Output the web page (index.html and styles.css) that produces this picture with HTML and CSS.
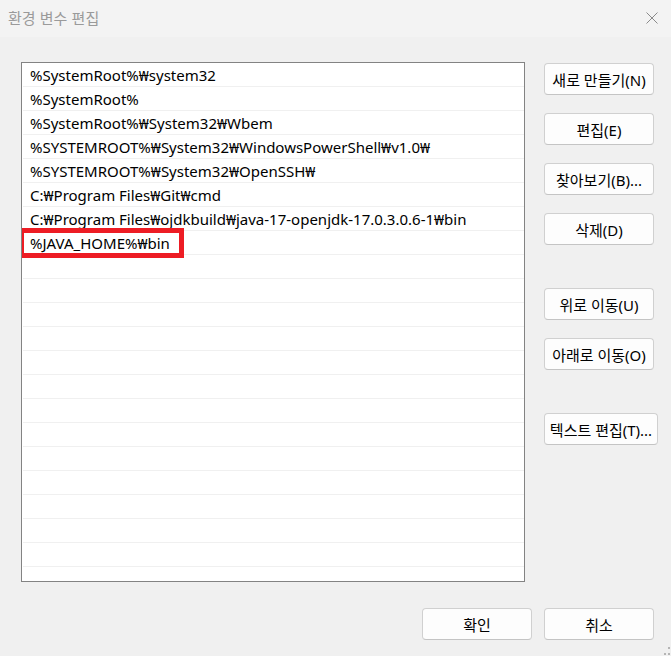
FILE: index.html
```html
<!DOCTYPE html>
<html lang="ko">
<head>
  <meta charset="UTF-8">
  <title>환경 변수 편집</title>
  <link rel="stylesheet" href="styles.css">
</head>
<body>

  <div class="window">
    <div class="titlebar">
      <span class="title">환경 변수 편집</span>
      <svg class="close" width="12" height="12" viewBox="0 0 12 12">
        <path d="M0.5 0.5 L11.5 11.5 M11.5 0.5 L0.5 11.5" stroke="#8a8a8a" stroke-width="1" fill="none"/>
      </svg>
    </div>

    <div class="content">
      <div class="list">
        <div class="row">%SystemRoot%₩system32</div>
        <div class="row">%SystemRoot%</div>
        <div class="row">%SystemRoot%₩System32₩Wbem</div>
        <div class="row">%SYSTEMROOT%₩System32₩WindowsPowerShell₩v1.0₩</div>
        <div class="row">%SYSTEMROOT%₩System32₩OpenSSH₩</div>
        <div class="row">C:₩Program Files₩Git₩cmd</div>
        <div class="row">C:₩Program Files₩ojdkbuild₩java-17-openjdk-17.0.3.0.6-1₩bin</div>
        <div class="row selected">%JAVA_HOME%₩bin<span class="highlight"></span></div>
        <div class="row"></div>
        <div class="row"></div>
        <div class="row"></div>
        <div class="row"></div>
        <div class="row"></div>
        <div class="row"></div>
        <div class="row"></div>
        <div class="row"></div>
        <div class="row"></div>
        <div class="row"></div>
        <div class="row"></div>
        <div class="row"></div>
        <div class="row"></div>
        <div class="row"></div>
      </div>

      <div class="actions">
        <button class="btn">새로 만들기(N)</button>
        <button class="btn">편집(E)</button>
        <button class="btn">찾아보기(B)...</button>
        <button class="btn">삭제(D)</button>
        <button class="btn group">위로 이동(U)</button>
        <button class="btn">아래로 이동(O)</button>
        <button class="btn group wide">텍스트 편집(T)...</button>
      </div>
    </div>

    <div class="footer">
      <button class="btn">확인</button>
      <button class="btn">취소</button>
    </div>

    <div class="grip">
      <span></span><span></span><span></span>
    </div>
  </div>

</body>
</html>
```

FILE: styles.css
```css
* {
  box-sizing: border-box;
}

body {
  margin: 0;
  padding: 0;
  background: #f0f0f0;
  font-family: 'Noto Sans', 'Noto Sans CJK KR', sans-serif;
  color: #000;
}

.window {
  position: relative;
  width: 671px;
  height: 656px;
  overflow: hidden;
}

.titlebar {
  height: 37px;
  background: #f3f3f3;
  display: flex;
  align-items: center;
  justify-content: space-between;
  padding: 0 13px 2px 8px;
}

.title {
  font-family: 'Noto Sans CJK KR', sans-serif;
  font-size: 15px;
  color: #9a9a9a;
}

.content {
  display: flex;
  padding: 25px 0 0 21px;
}

.list {
  width: 504px;
  height: 520px;
  background: #fff;
  border: 1px solid #838383;
  overflow: hidden;
}

.row {
  position: relative;
  height: 24px;
  margin-left: 1px;
  border-bottom: 1px solid #f0f0f0;
  padding: 1px 0 0 7px;
  font-size: 15px;
  line-height: 23px;
  white-space: nowrap;
}

.highlight {
  position: absolute;
  left: -4px;
  top: -3px;
  width: 165px;
  height: 30px;
  border: 5px solid #ed1c24;
}

.actions {
  display: flex;
  flex-direction: column;
  align-items: flex-start;
  gap: 18px;
  margin-left: 19px;
  padding-top: 1px;
}

.btn {
  width: 110px;
  height: 32px;
  padding: 0 1px;
  background: #fdfdfd;
  border: 1px solid #d0d0d0;
  border-bottom-color: #c4c4c4;
  border-radius: 4px;
  font-family: 'Noto Sans', 'Noto Sans CJK KR', sans-serif;
  font-size: 15px;
  color: #000;
  white-space: nowrap;
}

.btn.group {
  margin-top: 25px;
}

.btn.wide {
  width: 114px;
}

.footer {
  display: flex;
  justify-content: flex-end;
  gap: 12px;
  padding: 26px 17px 0 0;
}

.grip {
  position: absolute;
  right: 1px;
  bottom: 1px;
  width: 8px;
  height: 8px;
}

.grip span {
  position: absolute;
  width: 2px;
  height: 2px;
  background: #b5b5b5;
}

.grip span:nth-child(1) { right: 0; top: 0; }
.grip span:nth-child(2) { right: 0; bottom: 0; }
.grip span:nth-child(3) { right: 4px; bottom: 0; }
```
